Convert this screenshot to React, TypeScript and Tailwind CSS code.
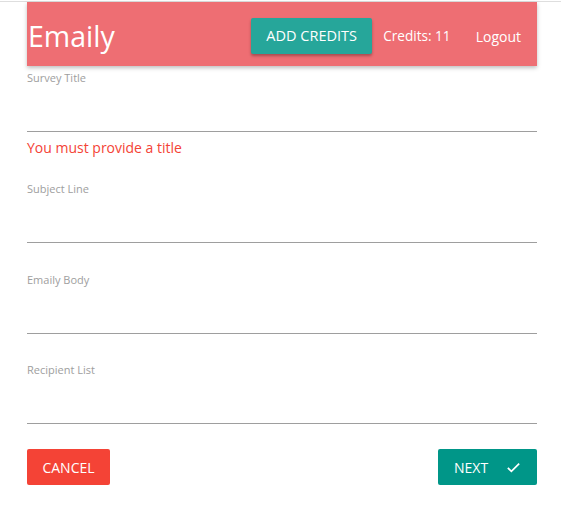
import React from 'react';

const fields = [
    { label: 'Survey Title', error: 'You must provide a title' },
    { label: 'Subject Line' },
    { label: 'Emaily Body' },
    { label: 'Recipient List' },
];

function Field({ label, error }: { label: string; error?: string }) {
    return (
        <div>
            <label className="block h-4 text-[11px] leading-4 text-[#9e9e9e]">{label}</label>
            <input type="text" className="block w-full h-[46px] border-b border-[#9e9e9e] outline-none bg-transparent" />
            {error && (
                <div className="h-[49px] pt-[6px] text-[14px] leading-5 text-[#f44336]">{error}</div>
            )}
        </div>
    );
}

export default function App() {
    return (
        <div className="min-h-screen bg-white mt-px border-t border-[#dedede] font-['Open_Sans','Noto_Sans',sans-serif]">
            <div className="ml-[27px] w-[510px]">
                {/* Nav */}
                <nav className="h-16 bg-[#ee6e73] text-white flex items-center pt-1 pl-[1px] pr-[16px] shadow-[0_2px_4px_rgba(0,0,0,0.25)]">
                    <a className="text-[28.5px] leading-none">Emaily</a>
                    <div className="ml-auto flex items-center">
                        <button className="h-9 w-[121px] rounded-[2px] bg-[#26a69a] text-[14.5px] uppercase shadow-[0_2px_3px_rgba(0,0,0,0.3)]">
                            Add Credits
                        </button>
                        <span className="ml-[11px] text-[13.6px]">Credits: 11</span>
                        <a className="ml-[25px] text-[14px]">Logout</a>
                    </div>
                </nav>

                {/* Form */}
                <form className="pt-[4px]">
                    {fields.map((f, i) => (
                        <div key={f.label} className={i < 2 ? '' : i === 2 ? 'mt-[29px]' : 'mt-[28px]'}>
                            <Field label={f.label} error={f.error} />
                        </div>
                    ))}
                    <div className="flex justify-between mt-[25px]">
                        <button type="button" className="h-9 w-[83px] rounded-[2px] bg-[#f44336] text-white text-[14px] uppercase">
                            Cancel
                        </button>
                        <button type="button" className="h-9 w-[99px] rounded-[2px] bg-[#009688] text-white text-[14px] uppercase flex items-center pl-[16px]">
                            Next
                            <svg className="ml-[17px]" width="17" height="17" viewBox="0 0 24 24" fill="none" stroke="white" strokeWidth="2.4">
                                <path d="M4 12.5l5 5L20 6.5" />
                            </svg>
                        </button>
                    </div>
                </form>
            </div>
        </div>
    );
}
